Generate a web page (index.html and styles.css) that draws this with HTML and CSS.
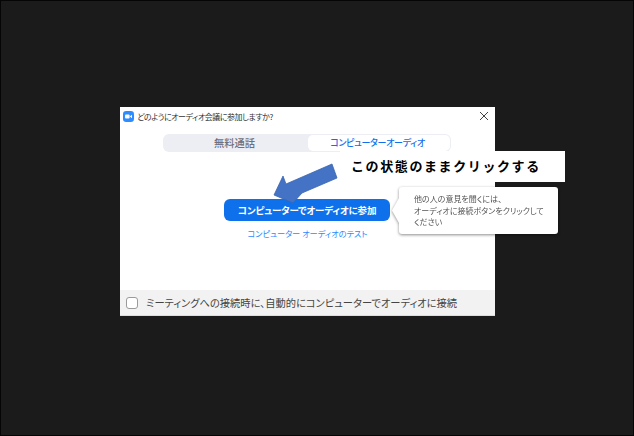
FILE: index.html
```html
<!DOCTYPE html>
<html lang="ja">
<head>
<meta charset="utf-8">
<title>オーディオ会議</title>
<link rel="stylesheet" href="styles.css">
</head>
<body>
<main class="stage">
  <section class="dialog">
    <header class="titlebar">
      <svg class="logo" width="11" height="11" viewBox="0 0 12 12"><rect width="12" height="12" rx="3.5" fill="#2d8cff"/><rect x="2.2" y="3.8" width="5" height="4.4" rx="1" fill="#fff"/><path d="M7.8 5.6 9.8 4.2V7.8L7.8 6.4z" fill="#fff"/></svg>
      <span class="title">どのようにオーディオ会議に参加しますか?</span>
      <svg class="close" width="10" height="10" viewBox="0 0 10 10"><path d="M1 1 9 9M9 1 1 9" stroke="#444" stroke-width="1" fill="none"/></svg>
    </header>
    <div class="content">
      <div class="tabs">
        <div class="tab tab-free">無料通話</div>
        <div class="tab tab-active">コンピューターオーディオ</div>
      </div>
      <button class="join">コンピューターでオーディオに参加</button>
      <a class="test">コンピューター オーディオのテスト</a>
    </div>
    <footer class="footer">
      <span class="checkbox"></span>
      <span class="footer-text">ミーティングへの接続時に、自動的にコンピューターでオーディオに接続</span>
    </footer>
  </section>
  <div class="note">この状態のままクリックする</div>
  <svg class="arrow" width="68" height="46" viewBox="0 0 68 46"><polygon points="2,35 11,16 14,24 60,4 65,18 30,33 21,43" fill="#4472c4" stroke="#3a66b0" stroke-width="0.8"/></svg>
  <aside class="tooltip">他の人の意見を聞くには、<br>オーディオに接続ボタンをクリックして<br>ください</aside>
</main>
</body>
</html>
```
FILE: styles.css
```css
* { box-sizing: border-box; }
html, body { margin: 0; height: 100%; }
body {
  background: #000;
  font-family: "Noto Sans CJK JP", "Liberation Sans", sans-serif;
  font-feature-settings: "palt";
}
.stage {
  position: relative;
  width: 634px;
  height: 436px;
  background: #1b1b1b;
  border: 1px solid #050505;
  padding: 106px 0 0 119px;
}
.dialog {
  width: 375px;
  height: 209px;
  background: #fff;
  display: flex;
  flex-direction: column;
}
.titlebar {
  height: 18px;
  display: flex;
  align-items: center;
  padding: 0 6px 0 3px;
  gap: 3px;
}
.title { flex: 1; font-size: 8px; letter-spacing: -0.45px; color: #333; }
.content {
  flex: 1;
  display: flex;
  flex-direction: column;
  align-items: center;
  padding-top: 9px;
}
.tabs {
  width: 288px;
  height: 18px;
  margin-left: -1px;
  display: grid;
  grid-template-columns: 144px 142px;
  background: #edeef3;
  border-radius: 6px;
  padding: 1px;
}
.tab {
  font-weight: 500;
  line-height: 16px;
  text-align: center;
}
.tab-free { font-size: 10.25px; color: #6e7080; padding-right: 3px; }
.tab-active {
  background: #fff;
  color: #0e71eb;
  border-radius: 5px;
  font-size: 9px;
  letter-spacing: -0.3px;
  padding-right: 3px;
}
.join {
  width: 166px;
  height: 22px;
  margin: 47px 0 0 -1px;
  border: 0;
  border-radius: 6px;
  background: #0e71eb;
  color: #fff;
  font: 700 9.5px "Noto Sans CJK JP", sans-serif;
  font-feature-settings: "palt";
  letter-spacing: -0.2px;
  padding: 0;
}
.test { margin: 6px 0 0 0; font-size: 8.2px; line-height: 13px; color: #2d8cff; }
.footer {
  height: 26px;
  background: #f2f2f2;
  display: flex;
  align-items: center;
  padding-left: 6px;
  gap: 8px;
  border-bottom: 1px solid #ddd;
}
.checkbox {
  width: 12px;
  height: 12px;
  background: #fff;
  border: 1px solid #9a9a9a;
  border-radius: 3px;
}
.footer-text { font-size: 10.25px; color: #444; }
.note {
  position: absolute;
  left: 339px;
  top: 150px;
  width: 225px;
  height: 31px;
  background: #fff;
  padding-left: 11px;
  font-size: 13px;
  font-weight: 700;
  font-feature-settings: normal;
  letter-spacing: 1.6px;
  line-height: 30px;
  color: #000;
}
.arrow { position: absolute; left: 271px; top: 159px; }
.tooltip {
  position: absolute;
  left: 398px;
  top: 186px;
  width: 159px;
  height: 47px;
  padding: 6px 0 0 15px;
  background: #fff;
  border-radius: 3px;
  filter: drop-shadow(0 1px 1.5px rgba(0,0,0,.45));
  font-size: 8px;
  line-height: 11.5px;
  white-space: nowrap;
  color: #555;
}
.tooltip::before {
  content: "";
  position: absolute;
  left: -7px;
  top: 11px;
  width: 7px;
  height: 25px;
  background: #fff;
  clip-path: polygon(100% 0, 0 50%, 100% 100%);
}
```
